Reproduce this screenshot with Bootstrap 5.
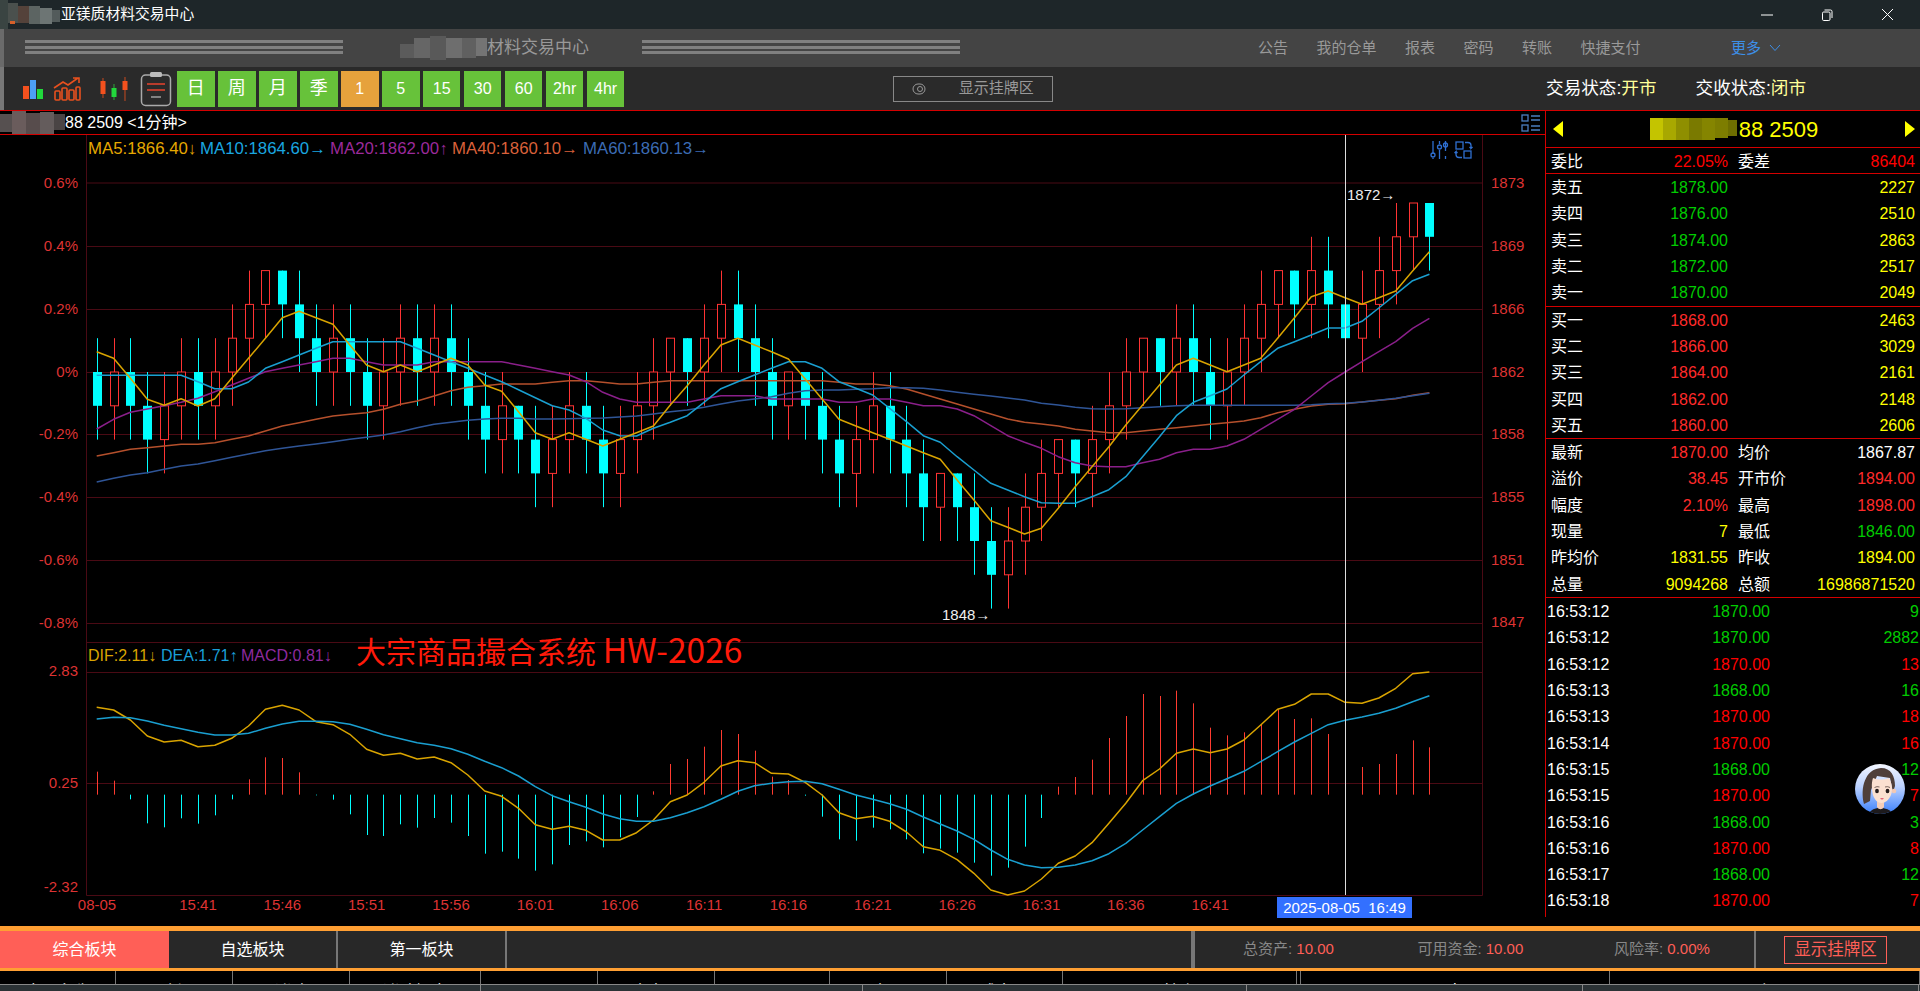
<!DOCTYPE html>
<html lang="zh-CN">
<head>
  <meta charset="UTF-8">
  <title>亚镁质材料交易中心</title>
  <link href="https://cdn.jsdelivr.net/npm/bootstrap@5.3.0/dist/css/bootstrap.min.css" rel="stylesheet">
  <style>
    html, body { height: 991px; overflow: hidden; background: #000; }
    body { font-family: "Liberation Sans", "Noto Sans CJK SC", sans-serif; color: #fff; width: 1920px; }
    svg { display: block; flex: none; }

    .title-bar { height: 29px; background: #1e2629; font-size: 14.8px; }
    .title-name { margin-left: 1px; }
    .win-btns { margin-right: 26px; gap: 48px; }

    .head-bar { height: 38px; background: #444; color: #999; box-shadow: inset 4px 0 0 #6a6a6a; }
    .stripes { width: 318px; height: 15px; margin-top: -1px;
      background: repeating-linear-gradient(#808080 0 3px, transparent 3px 5.6px); }
    .stripes-first { margin-left: 25px; }
    .head-title { width: 299px; padding-left: 57px; font-size: 17px; }
    .head-nav { margin-left: auto; padding-right: 139px; font-size: 15px; gap: 28.5px; }
    .head-more { color: #3d8fe8; margin-left: 62px; }

    .tool-bar { height: 43px; background: #2a2a2a; gap: 3.4px; box-shadow: inset 4px 0 0 #777; }
    .period { width: 37.6px; height: 36px; background: #67c23a; color: #fff; font-size: 16px; padding: 0; border: 0; border-radius: 0; }
    .period-cjk { font-size: 18px; }
    .period-on { background: #e6a23c; }
    .show-box { margin-left: 265px; width: 160px; height: 26px; border: 1px solid #888; color: #999; font-size: 15px; padding-left: 18px; gap: 33px; }
    .status-box { margin-left: auto; padding-right: 114px; font-size: 17.6px; gap: 39px; }
    .status-val { color: #ffff99; }

    .main-area { height: 816px; border-top: 1px solid #d40000; background: #000; }
    .chart-col { width: 1545px; }
    .symbol-row { height: 24px; border-bottom: 1px solid #d40000; font-size: 16px; }
    .symbol-row svg.list-ico { margin-left: auto; margin-right: 4px; }

    .quote-col { width: 375px; height: 806px; border-left: 1px solid #d40000; font-size: 16px; }
    .quote-head { height: 37px; border-bottom: 1px solid #d40000; color: #ff0; font-size: 22px; padding: 0 5px 0 7px; }
    .quote-block { border-bottom: 1px solid #d40000; }
    .quote-block-wb { height: 26px; }
    .quote-block-5 { height: 132.5px; }
    .quote-block-last { height: 159px; }
    .q-row { height: 26.3px; padding: 2px 5px 0; }
    .q-half { width: 187px; padding-right: 10px; }
    .q-half + .q-half { width: 177px; padding-right: 0; }
    .q-wide { flex: 1; text-align: right; }
    .tick-list { position: relative; }
    .tick-row { height: 26.3px; padding: 2px 1px 0; }
    .tick-time { width: 115px; }
    .tick-price { width: 108px; text-align: right; }
    .tick-qty { flex: 1; text-align: right; }
    .c-red { color: #ff2a2a; }
    .c-red2 { color: #f00; }
    .c-green { color: #0c0; }
    .c-yellow { color: #ff0; }
    .avatar-float { position: absolute; left: 309px; top: 166px; }

    .orange-rule { height: 5px; background: #ff9f33; }
    .tab-bar { height: 37px; background: #282828; font-size: 16px; }
    .tab-item { width: 169px; border-right: 2px solid #777; }
    .tab-on { background: #ff5f57; border-right: 0; }
    .tab-gap { width: 688px; border-right: 4px solid #777; }
    .stat-box { width: 561px; padding-left: 48px; font-size: 15px; color: #888; border-right: 2px solid #777; }
    .stat-second { margin-left: 83.5px; }
    .stat-third { margin-left: 90.7px; }
    .stat-val { color: #ff5f57; }
    .show-red { margin-left: 28px; width: 103px; height: 28px; border: 1px solid #ff5f57; color: #ff5f57; font-size: 16.5px; }
    .orange-thin { height: 3px; background: #ff9f33; }
    .head-cells { height: 13px; overflow: hidden; background: #000; font-size: 16px; }
    .cell { border-right: 1px solid #777; text-align: center; padding-top: 11px; line-height: 20px; overflow: hidden; }
    .foot-bar { height: 7px; background: #2b3235; border-top: 1px solid #888; }
    .foot-cell { border-right: 1px solid #888; }
  </style>
</head>
<body>

  <!-- window title -->
  <div class="title-bar d-flex align-items-center">
    <svg width="60" height="29" viewBox="0 0 60 29">
      <rect x="0" y="0" width="8" height="29" fill="#3a4442"/>
      <rect x="8" y="3" width="10" height="20" fill="#4a504d"/>
      <rect x="18" y="6" width="11" height="17" fill="#54423a"/>
      <rect x="29" y="6" width="11" height="18" fill="#5c6462"/>
      <rect x="40" y="8" width="12" height="16" fill="#6d7574"/>
      <rect x="52" y="10" width="8" height="12" fill="#535b5b"/>
      <rect x="10" y="21" width="5" height="3" fill="#d6602a"/>
    </svg>
    <span class="title-name">亚镁质材料交易中心</span>
    <div class="win-btns d-flex align-items-center ms-auto">
      <svg width="12" height="12" viewBox="0 0 12 12"><path d="M0 6h12" stroke="#fff" stroke-width="1"/></svg>
      <svg width="12" height="12" viewBox="0 0 12 12" fill="none" stroke="#fff"><rect x="1.5" y="3" width="7.5" height="8.5" rx="1.2"/><path d="M3.5 1h6a1.5 1.5 0 0 1 1.5 1.5V9"/></svg>
      <svg width="13" height="13" viewBox="0 0 13 13"><path d="M1 1l11 11M12 1L1 12" stroke="#fff" stroke-width="1"/></svg>
    </div>
  </div>

  <!-- site header -->
  <div class="head-bar d-flex align-items-center">
    <div class="stripes stripes-first"></div>
    <div class="head-title d-flex align-items-center">
      <svg width="87" height="26" viewBox="0 0 87 26">
        <rect x="0" y="9" width="14" height="14" fill="#5b5b5b"/>
        <rect x="14" y="3" width="16" height="20" fill="#666"/>
        <rect x="30" y="1" width="16" height="24" fill="#595959"/>
        <rect x="46" y="3" width="16" height="20" fill="#6e6e6e"/>
        <rect x="62" y="3" width="14" height="20" fill="#606060"/>
        <rect x="76" y="3" width="11" height="18" fill="#747474"/>
      </svg>
      <span>材料交易中心</span>
    </div>
    <div class="stripes"></div>
    <div class="head-nav d-flex align-items-center">
      <span>公告</span><span>我的仓单</span><span>报表</span><span>密码</span><span>转账</span><span>快捷支付</span>
      <span class="head-more d-flex align-items-center gap-2">更多
        <svg width="12" height="8" viewBox="0 0 12 8" fill="none" stroke="#3d8fe8"><path d="M1 1l5 5.5L11 1"/></svg>
      </span>
    </div>
  </div>

  <!-- toolbar -->
  <div class="tool-bar d-flex align-items-center">
    <svg width="173.6" height="43" viewBox="0 67 173.6 43" fill="none">
      <rect x="23" y="86" width="6" height="13" fill="#f4511e"/>
      <rect x="30" y="80" width="6" height="19" fill="#4d9ff5"/>
      <rect x="37" y="89" width="6" height="10" fill="#21d83c"/>
      <g stroke="#e8501e" stroke-width="1.6">
        <rect x="55" y="91" width="5" height="9" rx="1"/>
        <rect x="62" y="88" width="5" height="12" rx="1"/>
        <rect x="69" y="90" width="5" height="10" rx="1"/>
        <rect x="76" y="87" width="4" height="13" rx="1"/>
        <path d="M54 88l9-6 5 3 10-7M73 78h6v5"/>
      </g>
      <path d="M103 78v20M125 77v24" stroke="#c94a20"/>
      <path d="M114 84v16" stroke="#2eaa3a"/>
      <rect x="100.5" y="81" width="5" height="13" fill="#f4511e"/>
      <rect x="111.5" y="88" width="5" height="9" fill="#22d83c"/>
      <rect x="122.5" y="81" width="5" height="9" fill="#f4511e"/>
      <rect x="141.5" y="75" width="29" height="30.5" rx="4" stroke="#aaa" stroke-width="1.5"/>
      <rect x="150" y="72" width="12" height="5" rx="1.5" fill="#bbb"/>
      <path d="M147 84h18M147 90h18" stroke="#e8432e" stroke-width="1.6"/>
      <path d="M151 97h10" stroke="#999" stroke-width="1.6"/>
    </svg>
    <button class="period period-cjk">日</button>
    <button class="period period-cjk">周</button>
    <button class="period period-cjk">月</button>
    <button class="period period-cjk">季</button>
    <button class="period period-on">1</button>
    <button class="period">5</button>
    <button class="period">15</button>
    <button class="period">30</button>
    <button class="period">60</button>
    <button class="period">2hr</button>
    <button class="period">4hr</button>
    <div class="show-box d-flex align-items-center">
      <svg width="14" height="12" viewBox="0 0 14 12" fill="none" stroke="#999"><rect x="1" y="1" width="12" height="10" rx="5"/><circle cx="8" cy="6" r="2.5"/></svg>
      <span>显示挂牌区</span>
    </div>
    <div class="status-box d-flex align-items-center">
      <span>交易状态:<span class="status-val">开市</span></span>
      <span>交收状态:<span class="status-val">闭市</span></span>
    </div>
  </div>

  <div class="main-area d-flex align-items-start">
    <div class="chart-col">
      <div class="symbol-row d-flex align-items-center">
        <svg width="65" height="23" viewBox="0 0 65 23">
          <rect x="0" y="3" width="12" height="18" fill="#565050"/>
          <rect x="12" y="0" width="14" height="23" fill="#6a5c5c"/>
          <rect x="26" y="2" width="14" height="21" fill="#574c4c"/>
          <rect x="40" y="1" width="14" height="22" fill="#645c5c"/>
          <rect x="54" y="3" width="11" height="16" fill="#4a4444"/>
        </svg>
        <span>88 2509 &lt;1分钟&gt;</span>
        <svg class="list-ico" width="20" height="18" viewBox="0 0 20 18" fill="none" stroke="#4a7fc0" stroke-width="1.3">
          <rect x="1" y="1" width="6" height="6"/><rect x="1" y="11" width="6" height="6"/>
          <path d="M10 2h9M10 6h9M10 12h9M10 16h9"/>
        </svg>
      </div>
      <!-- same coordinates as the page, so the numbers read off the picture -->
      <svg id="chart" width="1545" height="791" viewBox="0 135 1545 791"></svg>
    </div>

    <div class="quote-col">
      <div class="quote-head d-flex align-items-center justify-content-between">
        <svg width="10" height="16" viewBox="0 0 10 16"><path d="M10 0v16L0 8z" fill="#ff0"/></svg>
        <div class="d-flex align-items-center">
          <svg width="89" height="26" viewBox="0 0 89 26">
            <rect x="0" y="2" width="13" height="22" fill="#c4c400"/>
            <rect x="13" y="2" width="13" height="22" fill="#a8a800"/>
            <rect x="26" y="2" width="13" height="22" fill="#8f8f00"/>
            <rect x="39" y="2" width="13" height="22" fill="#7a7a00"/>
            <rect x="52" y="2" width="13" height="22" fill="#858500"/>
            <rect x="65" y="2" width="13" height="20" fill="#7d7d00"/>
            <rect x="78" y="4" width="9" height="16" fill="#6e6e00"/>
          </svg>
          <span>88 2509</span>
        </div>
        <svg width="10" height="16" viewBox="0 0 10 16"><path d="M0 0v16l10-8z" fill="#ff0"/></svg>
      </div>
      <div id="wbBlock" class="quote-block quote-block-wb"></div>
      <div id="sellBlock" class="quote-block quote-block-5"></div>
      <div id="buyBlock" class="quote-block quote-block-5"></div>
      <div id="infoBlock" class="quote-block quote-block-last"></div>
      <div id="tickList" class="tick-list">
        <div class="avatar-float"></div>
      </div>
    </div>
  </div>

  <div class="orange-rule"></div>
  <div class="tab-bar d-flex align-items-stretch">
    <div class="tab-item tab-on d-flex align-items-center justify-content-center">综合板块</div>
    <div class="tab-item d-flex align-items-center justify-content-center">自选板块</div>
    <div class="tab-item d-flex align-items-center justify-content-center">第一板块</div>
    <div class="tab-gap"></div>
    <div class="stat-box d-flex align-items-center">
      <span>总资产: <span class="stat-val">10.00</span></span>
      <span class="stat-second">可用资金: <span class="stat-val">10.00</span></span>
      <span class="stat-third">风险率: <span class="stat-val">0.00%</span></span>
    </div>
    <div class="d-flex align-items-center">
      <div class="show-red d-flex align-items-center justify-content-center">显示挂牌区</div>
    </div>
  </div>
  <div class="orange-thin"></div>
  <div class="head-cells d-flex" id="headCells"></div>
  <div class="foot-bar d-flex" id="footBar"></div>

  <script src="https://cdn.jsdelivr.net/npm/bootstrap@5.3.0/dist/js/bootstrap.bundle.min.js"></script>
  <script>
    // quote panel
    function row2(a, b, aCls, c, d, dCls) {
      return '<div class="q-row d-flex align-items-center">' +
        '<div class="q-half d-flex justify-content-between"><span>' + a + '</span><span class="' + aCls + '">' + b + '</span></div>' +
        '<div class="q-half d-flex justify-content-between"><span>' + c + '</span><span class="' + dCls + '">' + d + '</span></div></div>';
    }
    function row3(name, price, cls, qty) {
      return '<div class="q-row d-flex align-items-center">' +
        '<div class="q-half d-flex justify-content-between"><span>' + name + '</span><span class="' + cls + '">' + price + '</span></div>' +
        '<div class="q-wide c-yellow">' + qty + '</div></div>';
    }
    document.getElementById('wbBlock').innerHTML = row2('委比', '22.05%', 'c-red2', '委差', '86404', 'c-red2');
    document.getElementById('sellBlock').innerHTML =
      [['卖五', '1878.00', 2227], ['卖四', '1876.00', 2510], ['卖三', '1874.00', 2863], ['卖二', '1872.00', 2517], ['卖一', '1870.00', 2049]]
        .map(function (r) { return row3(r[0], r[1], 'c-green', r[2]); }).join('');
    document.getElementById('buyBlock').innerHTML =
      [['买一', '1868.00', 2463], ['买二', '1866.00', 3029], ['买三', '1864.00', 2161], ['买四', '1862.00', 2148], ['买五', '1860.00', 2606]]
        .map(function (r) { return row3(r[0], r[1], 'c-red', r[2]); }).join('');
    document.getElementById('infoBlock').innerHTML =
      row2('最新', '1870.00', 'c-red', '均价', '1867.87', 'text-white') +
      row2('溢价', '38.45', 'c-red', '开市价', '1894.00', 'c-red') +
      row2('幅度', '2.10%', 'c-red', '最高', '1898.00', 'c-red') +
      row2('现量', '7', 'c-yellow', '最低', '1846.00', 'c-green') +
      row2('昨均价', '1831.55', 'c-yellow', '昨收', '1894.00', 'c-yellow') +
      row2('总量', '9094268', 'c-yellow', '总额', '16986871520', 'c-yellow');

    var ticks = [['16:53:12', '1870.00', 9, 'g'], ['16:53:12', '1870.00', 2882, 'g'], ['16:53:12', '1870.00', 13, 'r'],
      ['16:53:13', '1868.00', 16, 'g'], ['16:53:13', '1870.00', 18, 'r'], ['16:53:14', '1870.00', 16, 'r'],
      ['16:53:15', '1868.00', 12, 'g'], ['16:53:15', '1870.00', 7, 'r'], ['16:53:16', '1868.00', 3, 'g'],
      ['16:53:16', '1870.00', 8, 'r'], ['16:53:17', '1868.00', 12, 'g'], ['16:53:18', '1870.00', 7, 'r']];
    var tickList = document.getElementById('tickList');
    tickList.insertAdjacentHTML('afterbegin', ticks.map(function (t) {
      var cls = t[3] === 'g' ? 'c-green' : 'c-red2';
      return '<div class="tick-row d-flex align-items-center"><span class="tick-time">' + t[0] + '</span>' +
        '<span class="tick-price ' + cls + '">' + t[1] + '</span><span class="tick-qty ' + cls + '">' + t[2] + '</span></div>';
    }).join(''));

    // helper avatar
    document.querySelector('.avatar-float').innerHTML =
      '<svg width="50" height="50" viewBox="0 0 50 50"><defs>' +
      '<linearGradient id="avBg" x1="0" y1="0" x2="0" y2="1"><stop offset="0" stop-color="#f4f7ff"/><stop offset=".45" stop-color="#bcd2ff"/><stop offset="1" stop-color="#3a7ffb"/></linearGradient>' +
      '<clipPath id="avClip"><circle cx="25" cy="25" r="25"/></clipPath></defs>' +
      '<g clip-path="url(#avClip)"><rect width="50" height="50" fill="url(#avBg)"/>' +
      '<path d="M13 52c1-6 7-8 12-8s13 2 14 8z" fill="#1d1a1c"/>' +
      '<path d="M22 36h7v7c-2 3-5 3-7 0z" fill="#f5cdb8"/>' +
      '<path d="M9 40C5 24 10 5 26 4c10 0 14 8 14 18l-2 6-3-14-13-2-6 14-1 11z" fill="#4f3f3a"/>' +
      '<path d="M18 14c5 2 10 2 16 0 3 5 4 12 2 17-2 5-6 8-9.500 8s-7-3-8.500-8c-1-5-2-11 0-17z" fill="#fbe0d0"/>' +
      '<circle cx="39" cy="27" r="2.300" fill="#f3c8b2"/>' +
      '<ellipse cx="22" cy="27" rx="1.900" ry="2.200" fill="#241b1b"/><ellipse cx="32.500" cy="27" rx="1.900" ry="2.200" fill="#241b1b"/>' +
      '<path d="M19.500 23.500q2.500-1.500 5-.5M30 23q2.500-1 5 .5" stroke="#5a4640" stroke-width=".8" fill="none"/>' +
      '<path d="M25 34.500q2-1 4 0q-2 2-4 0z" fill="#e0516a"/></g></svg>';

    // bottom bars, clipped list header and footer
    var cells = [[116, '商品名称'], [117, '最新价'], [117, '涨跌'], [131, '涨跌幅度'], [117, '买入价'], [117, '卖出价'], [115, '买量'], [117, '卖量'], [116, '成交量'], [234, '持仓'], [4, ''], [309, '开盘价'], [310, '最高价']];
    document.getElementById('headCells').innerHTML = cells.map(function (c) {
      return '<div class="cell" style="width:' + c[0] + 'px">' + c[1] + '</div>';
    }).join('');
    document.getElementById('footBar').innerHTML = [481, 382, 384, 336, 336].map(function (w) {
      return '<div class="foot-cell" style="width:' + w + 'px"></div>';
    }).join('');

    // ----- chart -----
    var X0 = 96.7, STEP = 16.87, GRID = '#4a0a14', LBL = '#dd3333';
    function xAt(i) { return X0 + STEP * i; }
    function lvl(l) { return 372 - 33.8 * l; }
    function z7(v) { return 130 + v / 3; }
    function z10(v) { return 230 + v / 3; }
    function z8(v) { return 620 + v / 3; }

    // type, bodyTop, bodyBottom, wickTop, wickBottom (in 2-point price steps from 1862)
    var candles = [
      'c 0 -1 1 -2','r 0 -1 1 -2','c 0 -1 1 -2','c -1 -2 0 -3','r -1 -2 0 -3','r 0 -1 1 -2','c 0 -1 1 -2','r 0 -1 1 -2',
      'r 1 0 2 -1','r 2 1 3 0','r 3 2 3 1','c 3 2 3 1','c 2 1 3 0','c 1 0 2 -1','r 1 0 2 -1','c 1 0 2 -1',
      'c 0 -1 1 -2','r 0 -1 1 -2','r 1 0 2 -1','c 1 0 2 -1','r 1 0 2 -1','c 1 0 2 -1','c 0 -1 1 -2','c -1 -2 0 -3',
      'r -1 -2 0 -3','c -1 -2 -1 -3','c -2 -3 -1 -4','r -2 -3 -1 -4','r -1 -2 0 -3','c -1 -2 0 -3','c -2 -3 -1 -4','r -2 -3 -1 -4',
      'r -1 -2 0 -3','r 0 -1 1 -2','r 1 0 1 -1','c 1 0 1 -1','r 1 0 2 -1','r 2 1 3 0','c 2 1 3 0','c 1 0 2 -1',
      'c 0 -1 1 -2','r 0 -1 0 -2','c 0 -1 0 -2','c -1 -2 0 -3','c -2 -3 -1 -4','r -2 -3 -1 -4','r -1 -2 0 -3','c -1 -2 0 -3',
      'c -2 -3 -1 -4','c -3 -4 -2 -5','r -3 -4 -3 -5','c -3 -4 -3 -5','c -4 -5 -3 -6','c -5 -6 -4 -7','r -5 -6 -4 -7','r -4 -5 -3 -6',
      'r -3 -4 -2 -5','r -2 -3 -2 -4','c -2 -3 -2 -4','r -2 -3 -1 -4','r -1 -2 0 -3','r 0 -1 1 -2','r 1 0 1 -1','c 1 0 1 -1',
      'r 1 0 2 -1','c 1 0 2 -1','c 0 -1 1 -2','r 0 -1 1 -2','r 1 0 2 -1','r 2 1 3 0','r 3 2 3 1','c 3 2 3 1',
      'r 3 2 4 1','c 3 2 4 1','c 2 1 3 0','r 2 1 3 0','r 3 2 4 1','r 4 3 5 2','r 5 4 5 3','c 5 4 5 3'
    ];

    // MA values, three pieces read at different crops
    function ma(a, b, c) { return a.map(z7).concat(b.map(z10), c.map(z7)); }
    var lines = [
      { col: '#b5502c', pts: ma(
        [978,968,958,953,948,943,943,938,928,918,903,888,878,868,858,853,848,838,823,813,798,782,772,767],
        [462,462,462,457,452,452,457,462,462,457,452,452,452,452,452,452,452,452,452,452,457,462,462,467,477,492,507,522,537,552,567,577],
        [882,888,898,903,908,908,903,898,893,888,883,878,873,863,848,838,828,823,821,816,811,806,796,788]) },
      { col: '#2f5597', pts: ma(
        [1056,1045,1035,1028,1018,1008,1002,992,982,972,962,955,948,942,935,928,922,915,905,893,883,877,871,867],
        [565,565,567,567,566,565,564,561,558,552,545,540,532,522,513,507,500,490,482,480,480,478,476,473,473,475,480,487,493,498,504,510],
        [820,825,832,836,837,836,833,830,827,826,826,826,826,826,826,826,824,821,820,816,811,805,797,790]) },
      { col: '#8a1f8a', pts: ma(
        [897,868,847,837,827,817,805,785,765,745,725,715,705,695,685,685,695,705,705,705,695,695,695,695],
        [395,405,415,425,435,455,487,507,517,517,517,517,507,497,497,497,507,507,507,507,517,517,507,507,517,527,527,537,557,587,617,637],
        [955,980,998,1008,1010,1010,998,988,968,958,958,948,928,898,868,838,798,758,726,695,665,635,595,565]) },
      { col: '#1a9fd0', pts: ma(
        [736,736,736,736,736,736,755,776,776,756,715,695,675,655,635,635,635,635,635,655,675,695,715,735],
        [455,479,503,527,540,565,600,617,618,595,577,557,517,476,455,435,415,395,395,415,455,475,495,535,575,617,637,680,720,760,780,800],
        [1118,1120,1120,1100,1079,1040,980,920,857,817,797,777,735,695,655,635,615,594,594,574,534,493,452,433]) },
      { col: '#d9a400', pts: ma(
        [665,685,745,808,826,806,828,806,745,685,625,563,544,563,583,645,705,725,705,725,705,685,705,765],
        [484,545,608,628,608,628,648,628,608,588,525,467,405,345,325,345,365,387,447,507,568,588,608,628,648,668,688,750,810,872,892,912],
        [1195,1135,1070,1010,950,885,825,765,705,685,705,725,705,685,625,563,500,483,503,523,503,483,423,365]) }
    ];

    var dif = [262,270,300,348,366,361,380,376,355,318,268,256,270,305,314,343,388,406,400,417,411,428,465,513,
      529,565,614,628,619,631,660,660,638,600,545,525,487,438,422,428,460,462,487,525,578,596,589,604,636,680,691,719,760,810,825,813,777,730,708,668,610,550,482,447,400,387,398,387,360,315,268,253,222,222,247,250,234,205,161,156];
    var dea = [297,292,293,303,316,326,337,345,345,340,325,312,304,304,305,313,328,344,356,368,376,386,403,424,
      443,468,500,527,545,562,582,596,604,604,593,578,560,538,514,497,490,485,484,491,508,525,538,551,568,591,612,633,658,690,718,735,743,742,735,722,701,670,630,590,550,522,498,476,454,425,395,366,340,314,301,291,280,265,245,227];
    var bars = [455,482,538,610,622,595,611,586,538,478,412,414,457,526,539,583,645,648,613,623,594,608,648,701,
      695,716,752,733,675,664,682,652,591,514,432,417,380,330,342,392,470,480,527,590,658,662,623,628,658,700,686,698,728,767,743,680,594,500,471,419,354,288,222,228,212,250,323,346,337,315,268,297,295,342,430,441,432,402,361,382];

    function poly(pts, col, w) {
      return '<polyline fill="none" stroke="' + col + '" stroke-width="' + w + '" stroke-linejoin="round" points="' +
        pts.map(function (y, i) { return xAt(i).toFixed(1) + ',' + y.toFixed(1); }).join(' ') + '"/>';
    }
    function label(x, y, txt, anchor, col, size) {
      return '<text x="' + x + '" y="' + y + '" text-anchor="' + anchor + '" fill="' + col + '" font-size="' + size + '">' + txt + '</text>';
    }

    var s = '';
    // grid
    [183, 246.5, 309.5, 372.5, 434.5, 497.5, 560.5, 623.5, 642.5, 672.5, 783.5].forEach(function (y) {
      s += '<path d="M86 ' + y + 'H1482" stroke="' + GRID + '"/>';
    });
    s += '<path d="M86.500 135V895.500H1482.500V135" fill="none" stroke="' + GRID + '"/>';

    // axis labels
    [['0.6%', 183], ['0.4%', 246], ['0.2%', 309], ['0%', 372], ['-0.2%', 434], ['-0.4%', 497], ['-0.6%', 560], ['-0.8%', 623], ['2.83', 671], ['0.25', 783], ['-2.32', 887]].forEach(function (a) {
      s += label(78, a[1] + 4.5, a[0], 'end', LBL, 15);
    });
    [['1873', 183], ['1869', 246], ['1866', 309], ['1862', 372], ['1858', 434], ['1855', 497], ['1851', 560], ['1847', 622]].forEach(function (a) {
      s += label(1491, a[1] + 4.5, a[0], 'start', LBL, 15);
    });
    ['15:41','15:46','15:51','15:56','16:01','16:06','16:11','16:16','16:21','16:26','16:31','16:36','16:41'].forEach(function (t, i) {
      s += label(198 + 84.35 * i, 909.5, t, 'middle', LBL, 15);
    });
    s += label(97, 909.5, '08-05', 'middle', LBL, 15);

    // candles
    candles.forEach(function (c, i) {
      var p = c.split(' '), x = Math.round(xAt(i)) + 0.5, t = lvl(+p[1]), b = lvl(+p[2]);
      var col = p[0] === 'r' ? '#ff3333' : '#00ffff';
      s += '<path d="M' + x + ' ' + lvl(+p[3]) + 'V' + lvl(+p[4]) + '" stroke="' + col + '"/>';
      if (p[0] === 'r') s += '<rect x="' + (x - 4) + '" y="' + t + '" width="8" height="' + (b - t) + '" fill="#000" stroke="' + col + '"/>';
      else s += '<rect x="' + (x - 4.5) + '" y="' + t + '" width="9" height="' + (b - t) + '" fill="#0ff"/>';
    });
    lines.forEach(function (l) { s += poly(l.pts, l.col, 1.5); });

    // MACD
    bars.forEach(function (v, i) {
      var col = v < 524 ? '#ff3b30' : '#00ffff', x = Math.round(xAt(i)) + 0.5;
      s += '<path d="M' + x + ' ' + z8(524) + 'V' + z8(v) + '" stroke="' + col + '"/>';
    });
    s += poly(dif.map(z8), '#d9a400', 1.5) + poly(dea.map(z8), '#1a9fd0', 1.5);

    // legends
    s += label(88, 154, 'MA5:1866.40↓', 'start', '#e6a800', 16.8) +
      label(200, 154, 'MA10:1864.60→', 'start', '#1aa7e0', 16.8) +
      label(330, 154, 'MA20:1862.00↑', 'start', '#9b2a9b', 16.8) +
      label(452, 154, 'MA40:1860.10→', 'start', '#d9603a', 16.8) +
      label(583, 154, 'MA60:1860.13→', 'start', '#3c6cb4', 16.8);
    s += label(88, 661, 'DIF:2.11↓', 'start', '#d9a400', 16) +
      label(161, 661, 'DEA:1.71↑', 'start', '#1a9fd8', 16) +
      label(241, 661, 'MACD:0.81↓', 'start', '#8e2a9e', 16);
    s += '<text x="356" y="663" font-size="30" fill="#ff1a0a" font-family="Noto Sans CJK SC, sans-serif">大宗商品撮合系统 <tspan font-size="33.600">HW-2026</tspan></text>';

    // high / low marks
    s += label(1347, 199.5, '1872→', 'start', '#eeeeee', 15) + label(942, 619.5, '1848→', 'start', '#eeeeee', 15);

    // crosshair
    s += '<path d="M1345.500 135V895" stroke="#ddd"/>';
    s += '<rect x="1277" y="897" width="135" height="21" fill="#3370ff"/>';
    s += label(1344.5, 913, '2025-08-05&#160;&#160;16:49', 'middle', '#fff', 15);

    // chart tools, top right
    s += '<g fill="none" stroke="#2f6fd0" stroke-width="1.300">' +
      '<path d="M1433 141v13M1433 159v-1M1439.500 141v3M1439.500 150v9M1445.500 141v10M1445.500 156v3"/>' +
      '<circle cx="1433" cy="155" r="2"/><circle cx="1439.500" cy="147" r="2"/><circle cx="1445.500" cy="145" r="2"/>' +
      '<rect x="1456" y="142" width="7" height="7"/><rect x="1464" y="151" width="7" height="7"/>' +
      '<path d="M1465 142.500h3a3 3 0 0 1 3 3v3l1.500-1.500M1471 148.500l-1.500-1.500M1462 157.500h-3a3 3 0 0 1-3-3v-3l-1.500 1.500M1456 151.500l1.500 1.500"/></g>';

    document.getElementById('chart').innerHTML = s;
  </script>
</body>
</html>
